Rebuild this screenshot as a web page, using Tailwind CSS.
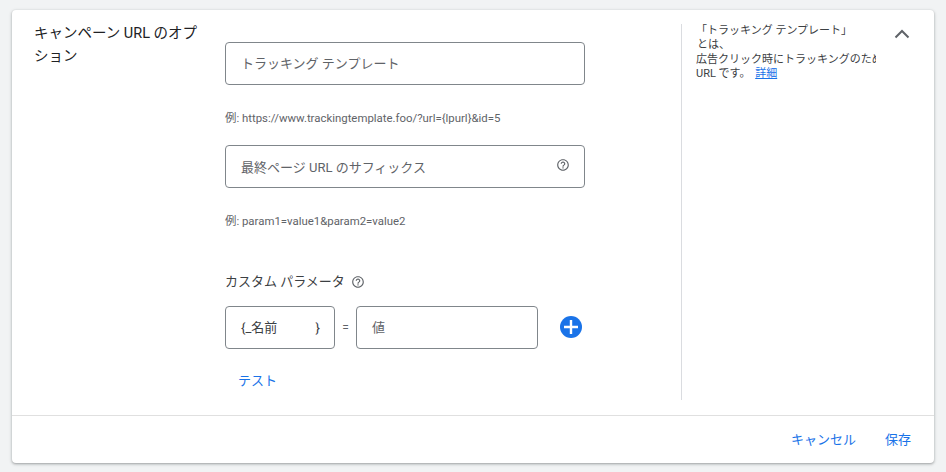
<!DOCTYPE html>
<html lang="ja">
<head>
    <meta charset="UTF-8">
    <meta name="viewport" content="width=device-width, initial-scale=1.0">
    <title>キャンペーン URL のオプション</title>
    <script src="https://cdn.jsdelivr.net/npm/@tailwindcss/browser@4"></script>
</head>
<body class="bg-[#f1f3f4] h-[472px] overflow-hidden font-['Roboto','Noto_Sans_CJK_JP',sans-serif]">
    <div class="pt-[10px] px-[12px]">
        <div class="bg-white rounded-[4px] h-[453px] flex flex-col shadow-[0_1px_2px_rgba(60,64,67,0.3),0_1px_3px_1px_rgba(60,64,67,0.15)]">
            <div class="flex h-[405px]">
                <!-- section title -->
                <div class="w-[213px] shrink-0 pl-[22px] pr-[24px] pt-[12px] text-[14.5px] leading-[23px] text-[#202124]">
                    キャンペーン URL のオプション
                </div>

                <!-- fields -->
                <div class="w-[456px] shrink-0 pt-[32px]">
                    <div class="w-[360px] h-[43px] border border-[#80868b] rounded-[4px] flex items-center pl-[15px] pt-[1px] text-[13px] text-[#5f6368]">トラッキング テンプレート</div>
                    <p class="mt-[25px] h-[16px] text-[11.4px] leading-[16px] text-[#5f6368]">例: https://www.trackingtemplate.foo/?url={lpurl}&amp;id=5</p>

                    <div class="mt-[19px] w-[360px] h-[43px] border border-[#80868b] rounded-[4px] flex items-center justify-between pl-[15px] pr-[14px] text-[13px] text-[#5f6368]">
                        <span class="pt-[2px]">最終ページ URL のサフィックス</span>
                        <svg class="w-[14px] h-[14px] mb-[4px]" viewBox="0 0 24 24" fill="#5f6368"><path d="M11 18h2v-2h-2v2zm1-16C6.48 2 2 6.48 2 12s4.48 10 10 10 10-4.48 10-10S17.52 2 12 2zm0 18c-4.41 0-8-3.59-8-8s3.59-8 8-8 8 3.59 8 8-3.59 8-8 8zm0-14c-2.21 0-4 1.79-4 4h2c0-1.1.9-2 2-2s2 .9 2 2c0 2-3 1.75-3 5h2c0-2.25 3-2.5 3-5 0-2.21-1.79-4-4-4z"/></svg>
                    </div>
                    <p class="mt-[25px] h-[16px] text-[11.4px] leading-[16px] text-[#5f6368]">例: param1=value1&amp;param2=value2</p>

                    <div class="mt-[41px] h-[24px] flex items-center gap-[6px] text-[13px] text-[#3c4043]">
                        <span>カスタム パラメータ</span>
                        <svg class="w-[14px] h-[14px]" viewBox="0 0 24 24" fill="#5f6368"><path d="M11 18h2v-2h-2v2zm1-16C6.48 2 2 6.48 2 12s4.48 10 10 10 10-4.48 10-10S17.52 2 12 2zm0 18c-4.41 0-8-3.59-8-8s3.59-8 8-8 8 3.59 8 8-3.59 8-8 8zm0-14c-2.21 0-4 1.79-4 4h2c0-1.1.9-2 2-2s2 .9 2 2c0 2-3 1.75-3 5h2c0-2.25 3-2.5 3-5 0-2.21-1.79-4-4-4z"/></svg>
                    </div>

                    <div class="mt-[12px] flex items-center">
                        <div class="w-[110px] h-[43px] border border-[#80868b] rounded-[4px] flex items-center justify-between pl-[15px] pr-[14px] text-[13px] text-[#3c4043]">
                            <span>{_名前</span>
                            <span>}</span>
                        </div>
                        <span class="w-[21px] text-center text-[12px] text-[#5f6368]">=</span>
                        <div class="w-[182px] h-[43px] border border-[#80868b] rounded-[4px] flex items-center pl-[15px] text-[13px] text-[#5f6368]">値</div>
                        <svg class="w-[22px] h-[22px] ml-[22px] mb-[1px]" viewBox="0 0 22 22"><circle cx="11" cy="11" r="11" fill="#1a73e8"/><path d="M11 4v14M4 11h14" stroke="#fff" stroke-width="2.4"/></svg>
                    </div>

                    <a class="block mt-[22px] ml-[13px] text-[13px] leading-[20px] text-[#1a73e8]" href="#">テスト</a>
                </div>

                <!-- help panel -->
                <div class="flex-1 flex items-start mt-[14px] mb-[15px] border-l border-[#dadce0] pl-[14px]">
                    <div class="w-[180px] overflow-hidden text-[11px] leading-[14.3px] text-[#3c4043] whitespace-nowrap">
                        <p>「トラッキング テンプレート」</p>
                        <p class="pl-[1px]">とは、</p>
                        <p>広告クリック時にトラッキングのために使用される</p>
                        <p>URL です。 <a class="ml-[2px] text-[#1a73e8] underline" href="#">詳細</a></p>
                    </div>
                    <svg class="w-[18px] h-[18px] ml-[17px] mt-[1px]" viewBox="0 0 18 18" fill="none"><path d="M2.5 12.5 9 6l6.5 6.5" stroke="#5f6368" stroke-width="2"/></svg>
                </div>
            </div>

            <!-- footer -->
            <div class="flex-1 border-t border-[#e0e0e0] flex items-center justify-end pr-[23px] gap-[29px] text-[13px] text-[#1a73e8]">
                <button>キャンセル</button>
                <button>保存</button>
            </div>
        </div>
    </div>
</body>
</html>
